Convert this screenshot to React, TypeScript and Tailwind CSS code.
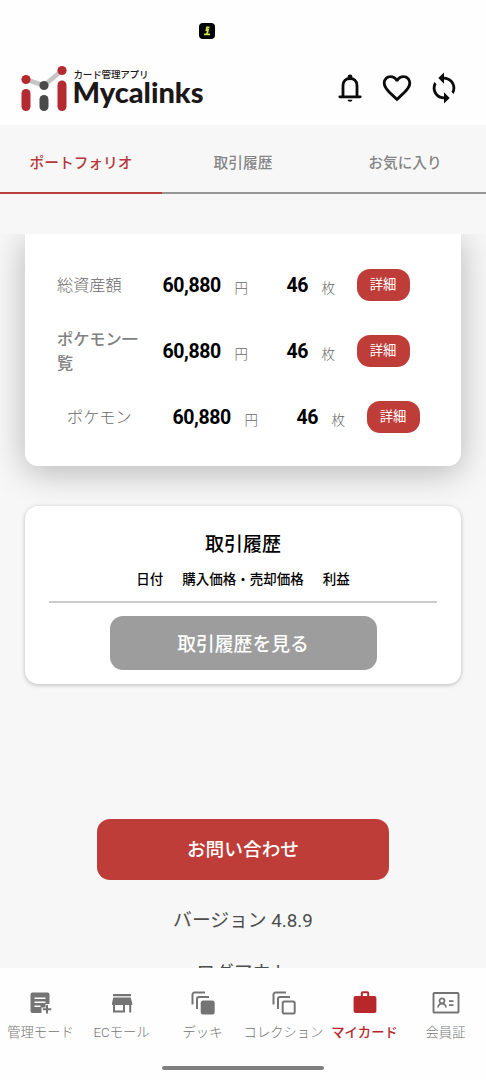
import type { ReactNode } from 'react'
import { MdFavoriteBorder, MdSync } from 'react-icons/md'

type Row = {
    label: string
    price: string
    count: string
    bold?: boolean
    indent?: boolean
}

type NavItem = {
    label: string
    icon: ReactNode
    active?: boolean
}

/* =========================
   DATA
========================= */
const tabs = ['ポートフォリオ', '取引履歴', 'お気に入り']

const rows: Row[] = [
    { label: '総資産額', price: '60,880', count: '46' },
    { label: 'ポケモン一覧', price: '60,880', count: '46', bold: true },
    { label: 'ポケモン', price: '60,880', count: '46', indent: true },
]

const navItems: NavItem[] = [
    { label: '管理モード', icon: <ManageIcon /> },
    { label: 'ECモール', icon: <StoreIcon /> },
    { label: 'デッキ', icon: <StackIcon filled /> },
    { label: 'コレクション', icon: <StackIcon /> },
    { label: 'マイカード', icon: <CaseIcon />, active: true },
    { label: '会員証', icon: <MemberIcon /> },
]

/* =========================
   ICONS
========================= */
function BellIcon() {
    return (
        <svg width="24" height="28" viewBox="0 0 24 28" fill="none">
            <path d="M5 23V11.5C5 7 8 4.500 12 4.500s7 2.500 7 7V23" stroke="#0b0b0b" strokeWidth="2.800" />
            <path d="M1.800 22.800h20.400" stroke="#0b0b0b" strokeWidth="2.800" strokeLinecap="round" />
            <circle cx="12" cy="2.800" r="2.400" fill="#0b0b0b" />
            <path d="M9.500 25.700h5c-.3 1.200-1.200 2-2.500 2s-2.200-.8-2.500-2z" fill="#0b0b0b" />
        </svg>
    )
}

function ManageIcon() {
    return (
        <svg width="24" height="24" viewBox="0 0 24 24">
            <path d="M3.500 1.500h15a2 2 0 0 1 2 2V13h-4v3.500h-4V22h-9a2 2 0 0 1-2-2V3.500a2 2 0 0 1 2-2z" fill="currentColor" />
            <path d="M5.500 7.300h11M5.500 11.300h11M5.500 15.300h6" stroke="white" strokeWidth="1.400" />
            <path d="M18 14v8.500M13.800 18.300h8.500" stroke="currentColor" strokeWidth="2" />
        </svg>
    )
}

function StoreIcon() {
    return (
        <svg width="24" height="24" viewBox="0 0 24 24" fill="currentColor">
            <path d="M3 3h18v2.200H3zM3.300 6.500h17.400l1.500 5.500v2h-1v7.500h-2V14h-4.200v7.500H3V14H2v-2zM5 14v5.500h8V14z" fillRule="evenodd" />
        </svg>
    )
}

function StackIcon({ filled = false }: { filled?: boolean }) {
    return (
        <svg width="24" height="24" viewBox="0 0 24 24" fill="none" stroke="currentColor" strokeWidth="2">
            <path d="M1.500 13.500v-10a2 2 0 0 1 2-2H14" />
            <path d="M6 18V8a2 2 0 0 1 2-2h10" />
            <rect x="10.700" y="10.500" width="12" height="12" rx="1.500" fill={filled ? 'currentColor' : 'none'} />
        </svg>
    )
}

function CaseIcon() {
    return (
        <svg width="24" height="24" viewBox="0 0 24 24">
            <path d="M8.800 6V2.300a1 1 0 0 1 1-1h4.400a1 1 0 0 1 1 1V6" fill="none" stroke="currentColor" strokeWidth="2" />
            <rect x="0.600" y="5" width="22.800" height="17" rx="2" fill="currentColor" />
        </svg>
    )
}

function MemberIcon() {
    return (
        <svg width="28" height="24" viewBox="0 0 28 24" fill="none" stroke="currentColor">
            <rect x="1.500" y="2" width="25" height="19.500" rx="0.800" strokeWidth="1.900" />
            <circle cx="10" cy="9.800" r="2.500" strokeWidth="1.700" />
            <path d="M6 16.500c.3-2.500 1.800-3.800 4-3.800s3.700 1.300 4 3.800" strokeWidth="1.700" />
            <path d="M17 10.200h4.500M17 14.200h4.500" strokeWidth="1.700" />
        </svg>
    )
}

function Logo() {
    return (
        <svg width="184" height="48" viewBox="0 0 184 48">
            <path d="M5 15.500 23 21.500 41 6.500" fill="none" stroke="#c6c6c6" strokeWidth="4.600" />
            <circle cx="5" cy="15.500" r="4.600" fill="#b52a30" />
            <circle cx="23" cy="21.500" r="4.600" fill="#4a4a4a" />
            <circle cx="41" cy="6.500" r="4.600" fill="#b52a30" />
            <rect x="0.500" y="25" width="9" height="22" rx="4.500" fill="#b52a30" />
            <rect x="18.500" y="31" width="9" height="16" rx="4.500" fill="#4a4a4a" />
            <rect x="36.500" y="16.500" width="9" height="30.500" rx="4.500" fill="#b52a30" />
            <text x="52.500" y="14" fontSize="9.600" fontWeight="500" fill="#1c1718" textLength="75">
                カード管理アプリ
            </text>
            <text x="51.500" y="39" fontSize="28" fontWeight="900" fill="#1c1718" fontFamily="Lato, sans-serif" textLength="131" lengthAdjust="spacingAndGlyphs">
                Mycalinks
            </text>
        </svg>
    )
}

/* =========================
   SECTIONS
========================= */
function Header() {
    return (
        <header className="h-[125px] shrink-0 bg-[#fefefe]">
            <div className="flex h-[62px] items-center justify-center pr-[73px]">
                <div className="flex size-4 items-center justify-center rounded-[4px] bg-black">
                    <svg width="8" height="10" viewBox="0 0 8 10" fill="none" stroke="#d4e34a" strokeWidth="1.800">
                        <path d="M6.500 1.500H4L3.500 4H5L4 8M1 8.300h6" />
                    </svg>
                </div>
            </div>
            <div className="flex h-[52px] items-center justify-between pr-[25px] pl-[21px]">
                <Logo />
                <div className="flex items-center text-[#0b0b0b]">
                    <BellIcon />
                    <MdFavoriteBorder className="ml-[18px] size-[34px]" />
                    <MdSync className="ml-[13px] size-[34px]" />
                </div>
            </div>
        </header>
    )
}

function AssetRow({ row }: { row: Row }) {
    return (
        <div className={`flex h-[66px] items-center ${row.indent ? 'pl-[42px]' : 'pl-8'}`}>
            <div className={`w-[105.500px] pt-0.5 pr-5 text-[16.200px] leading-6 ${row.bold ? 'font-medium text-[#808080]' : 'font-light text-[#6a6a6a]'}`}>
                {row.label}
            </div>
            <span className="w-[72px] pt-0.5 text-[19.500px] font-bold tracking-[-0.4px] text-black">{row.price}</span>
            <span className="w-[52px] pt-[7px] text-[13.500px] font-light text-[#666]">円</span>
            <span className="w-[35px] pt-0.5 text-[19.500px] font-bold tracking-[-0.4px] text-black">{row.count}</span>
            <span className="w-[35px] pt-[7px] text-[13.500px] font-light text-[#666]">枚</span>
            <button className="h-8 w-[53px] rounded-[13px] bg-[#bf3d38] pt-px text-[13.300px] text-white">詳細</button>
        </div>
    )
}

export default function App() {
    return (
        <div className="flex h-[1080px] w-[486px] flex-col overflow-hidden bg-[#f7f7f7] font-[Roboto,'Noto_Sans_CJK_JP',sans-serif]">
            <Header />

            {/* TABS */}
            <nav className="mb-10 grid h-[69px] shrink-0 grid-cols-3">
                {tabs.map((tab, index) => (
                    <button
                        key={tab}
                        className={`border-b-2 pt-[9px] text-[14.700px] font-medium ${index === 0 ? 'border-[#b93c3e] text-[#b4373a]' : 'border-[#969696] text-[#858585]'}`}
                    >
                        {tab}
                    </button>
                ))}
            </nav>

            {/* SCROLLED CONTENT */}
            <main className="flex h-[734px] shrink-0 flex-col items-center overflow-hidden">
                <section className="h-[231.500px] w-[436px] shrink-0 rounded-b-[13px] bg-white pt-[17.500px] shadow-[0_6px_34px_rgba(0,0,0,0.270)]">
                    {rows.map((row) => (
                        <AssetRow key={row.label} row={row} />
                    ))}
                </section>

                <section className="mt-[40.500px] flex h-[178px] w-[436px] shrink-0 flex-col items-center rounded-[13px] bg-white px-6 pt-[25px] shadow-[0_1px_4px_rgba(0,0,0,0.250)]">
                    <h2 className="text-[19px] leading-7 font-medium text-black">取引履歴</h2>
                    <div className="flex h-[44px] w-full items-center justify-center gap-[19px] border-b-2 border-[#cbcbcb] pb-0.5 text-[13.500px] font-medium text-black">
                        <span>日付</span>
                        <span>購入価格・売却価格</span>
                        <span>利益</span>
                    </div>
                    <button className="mt-[13px] h-[54px] w-[267px] rounded-[13px] bg-[#9d9d9d] pt-[5px] text-[18.800px] font-medium text-white">
                        取引履歴を見る
                    </button>
                </section>

                <button className="mt-[135px] h-[61px] w-[292px] shrink-0 rounded-[13px] bg-[#bf3d38] pt-0.5 text-[18.700px] font-medium text-white">
                    お問い合わせ
                </button>
                <p className="mt-[27px] text-[18.800px] leading-7 text-[#4d4d4d]">バージョン 4.8.9</p>
                <p className="mt-6 text-[18.700px] leading-7 text-[#4d4d4d]">ログアウト</p>
            </main>

            {/* BOTTOM NAVIGATION */}
            <footer className="flex h-28 shrink-0 flex-col items-center bg-[#fefefe]">
                <div className="grid h-[98px] w-full grid-cols-6 pt-[23px]">
                    {navItems.map((item) => (
                        <div
                            key={item.label}
                            className={`flex flex-col items-center gap-2 ${item.active ? 'text-[#b8282b]' : 'text-[#747474]'}`}
                        >
                            {item.icon}
                            <span className={`text-[13.300px] leading-5 whitespace-nowrap ${item.active ? 'font-medium' : 'font-light'}`}>
                                {item.label}
                            </span>
                        </div>
                    ))}
                </div>
                <div className="h-1 w-[162px] rounded-full bg-[#7f7f7f]" />
            </footer>
        </div>
    )
}
